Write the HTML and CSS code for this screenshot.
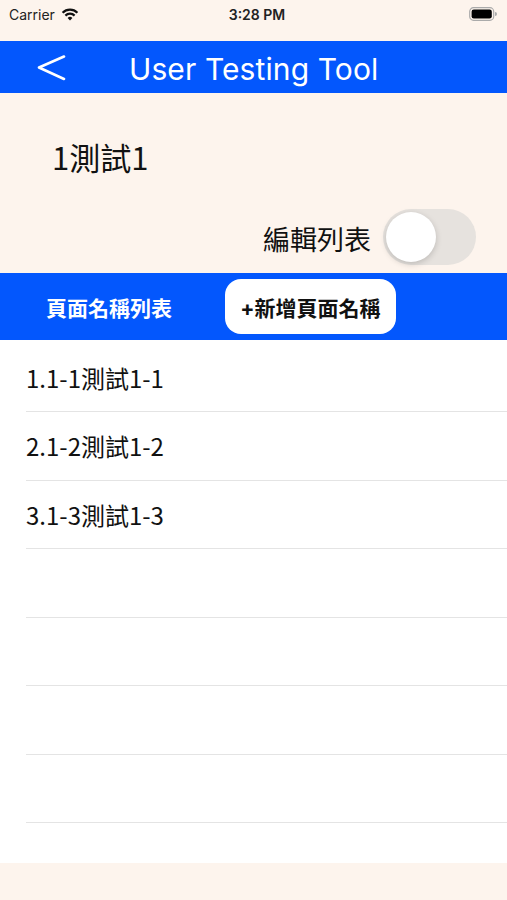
FILE: index.html
```html
<!DOCTYPE html>
<html lang="zh-Hant">
<head>
    <meta charset="UTF-8">
    <meta name="viewport" content="width=device-width, initial-scale=1.0">
    <title>User Testing Tool</title>
    <link rel="stylesheet" href="styles.css">
</head>
<body>
    <div class="status-bar">
        <div class="status-left">
            <span>Carrier</span>
            <svg class="wifi" width="18" height="13" viewBox="0 0 18 13">
                <path d="M9 12.5 L6.6 9.9 A3.4 3.4 0 0 1 11.4 9.9 Z" fill="#111"/>
                <path d="M4.4 7.6 A6.5 6.5 0 0 1 13.6 7.6" fill="none" stroke="#111" stroke-width="2.2"/>
                <path d="M1.6 4.8 A10.4 10.4 0 0 1 16.4 4.8" fill="none" stroke="#111" stroke-width="2.2"/>
            </svg>
        </div>
        <div class="status-time">3:28 PM</div>
        <div class="status-right">
            <svg width="28" height="14" viewBox="0 0 28 14">
                <rect x="0.7" y="0.7" width="24" height="12.6" rx="3.8" fill="none" stroke="#aaa" stroke-width="1.2"/>
                <rect x="2.6" y="2.6" width="20.2" height="8.8" rx="2.2" fill="#000"/>
                <path d="M26 5 A2 2 0 0 1 26 9 Z" fill="#aaa"/>
            </svg>
        </div>
    </div>

    <header class="nav-bar">
        <a href="#" class="back">
            <svg width="30" height="26" viewBox="0 0 30 26">
                <polyline points="27,1.5 2,12.5 27,24" fill="none" stroke="#fff" stroke-width="2.6" stroke-linejoin="round" stroke-linecap="round"/>
            </svg>
        </a>
        <h1 class="nav-title">User Testing Tool</h1>
    </header>

    <section class="project-info">
        <h2 class="project-name">1測試1</h2>
        <div class="edit-row">
            <span class="edit-label">編輯列表</span>
            <div class="switch"><div class="knob"></div></div>
        </div>
    </section>

    <div class="tab-bar">
        <span class="tab-label">頁面名稱列表</span>
        <button class="add-button">+新增頁面名稱</button>
    </div>

    <main class="page-list">
        <div class="row">1.1-1測試1-1</div>
        <div class="row">2.1-2測試1-2</div>
        <div class="row">3.1-3測試1-3</div>
        <div class="row"></div>
        <div class="row"></div>
        <div class="row"></div>
        <div class="row"></div>
        <div class="row"></div>
    </main>

    <footer class="bottom-area"></footer>
</body>
</html>
```

FILE: styles.css
```css
* {
    box-sizing: border-box;
}

body {
    margin: 0;
    height: 900px;
    display: flex;
    flex-direction: column;
    font-family: Inter, "Noto Sans CJK TC", sans-serif;
    background-color: #fdf4ed;
    color: #111;
    overflow: hidden;
}

.status-bar {
    height: 41px;
    display: flex;
    align-items: flex-start;
    justify-content: space-between;
    padding: 6px 10px 0 9px;
    font-size: 14px;
    color: #222;
}

.status-left {
    display: flex;
    align-items: center;
    gap: 6px;
    width: 120px;
}

.status-time {
    font-weight: 600;
    padding-left: 8px;
}

.status-right {
    width: 120px;
    display: flex;
    justify-content: flex-end;
    padding-top: 1px;
}

.nav-bar {
    height: 52px;
    background-color: #0357fd;
    display: flex;
    align-items: center;
    padding-left: 37px;
}

.back {
    display: flex;
    width: 92px;
    margin-top: 2px;
}

.nav-title {
    margin: 0;
    padding-top: 3px;
    font-family: Inter, sans-serif;
    font-weight: 400;
    font-size: 30px;
    color: #fff;
    letter-spacing: 0.1px;
}

.project-info {
    height: 180px;
    padding: 46px 31px 0 52px;
}

.project-name {
    margin: 0;
    height: 36px;
    line-height: 36px;
    font-family: "Noto Sans CJK TC", sans-serif;
    font-size: 31px;
    font-weight: 400;
}

.edit-row {
    margin-top: 34px;
    display: flex;
    justify-content: flex-end;
    align-items: center;
    gap: 12px;
}

.edit-label {
    font-size: 27px;
    padding-top: 2px;
}

.switch {
    width: 93px;
    height: 56px;
    border-radius: 28px;
    background-color: #e6e2de;
    padding: 3px;
}

.knob {
    width: 50px;
    height: 50px;
    border-radius: 50%;
    background-color: #fff;
    box-shadow: 0 2px 6px rgba(0, 0, 0, 0.18);
}

.tab-bar {
    height: 67px;
    background-color: #0357fd;
    display: flex;
    align-items: center;
    padding-left: 46px;
}

.tab-label {
    width: 179px;
    color: #fff;
    font-size: 21px;
    font-weight: 700;
}

.add-button {
    width: 171px;
    height: 55px;
    border: none;
    border-radius: 16px;
    background-color: #fff;
    color: #111;
    font-family: Inter, "Noto Sans CJK TC", sans-serif;
    font-size: 21px;
    font-weight: 700;
}

.page-list {
    height: 523px;
    background-color: #fff;
    padding-top: 3.5px;
    overflow: hidden;
}

.row {
    margin-left: 26px;
    height: 68.5px;
    border-bottom: 1px solid #e4e4e4;
    display: flex;
    align-items: center;
    font-family: "Noto Sans CJK TC", sans-serif;
    font-size: 24px;
}

.bottom-area {
    flex: 1;
    background-color: #fdf4ed;
}
```
